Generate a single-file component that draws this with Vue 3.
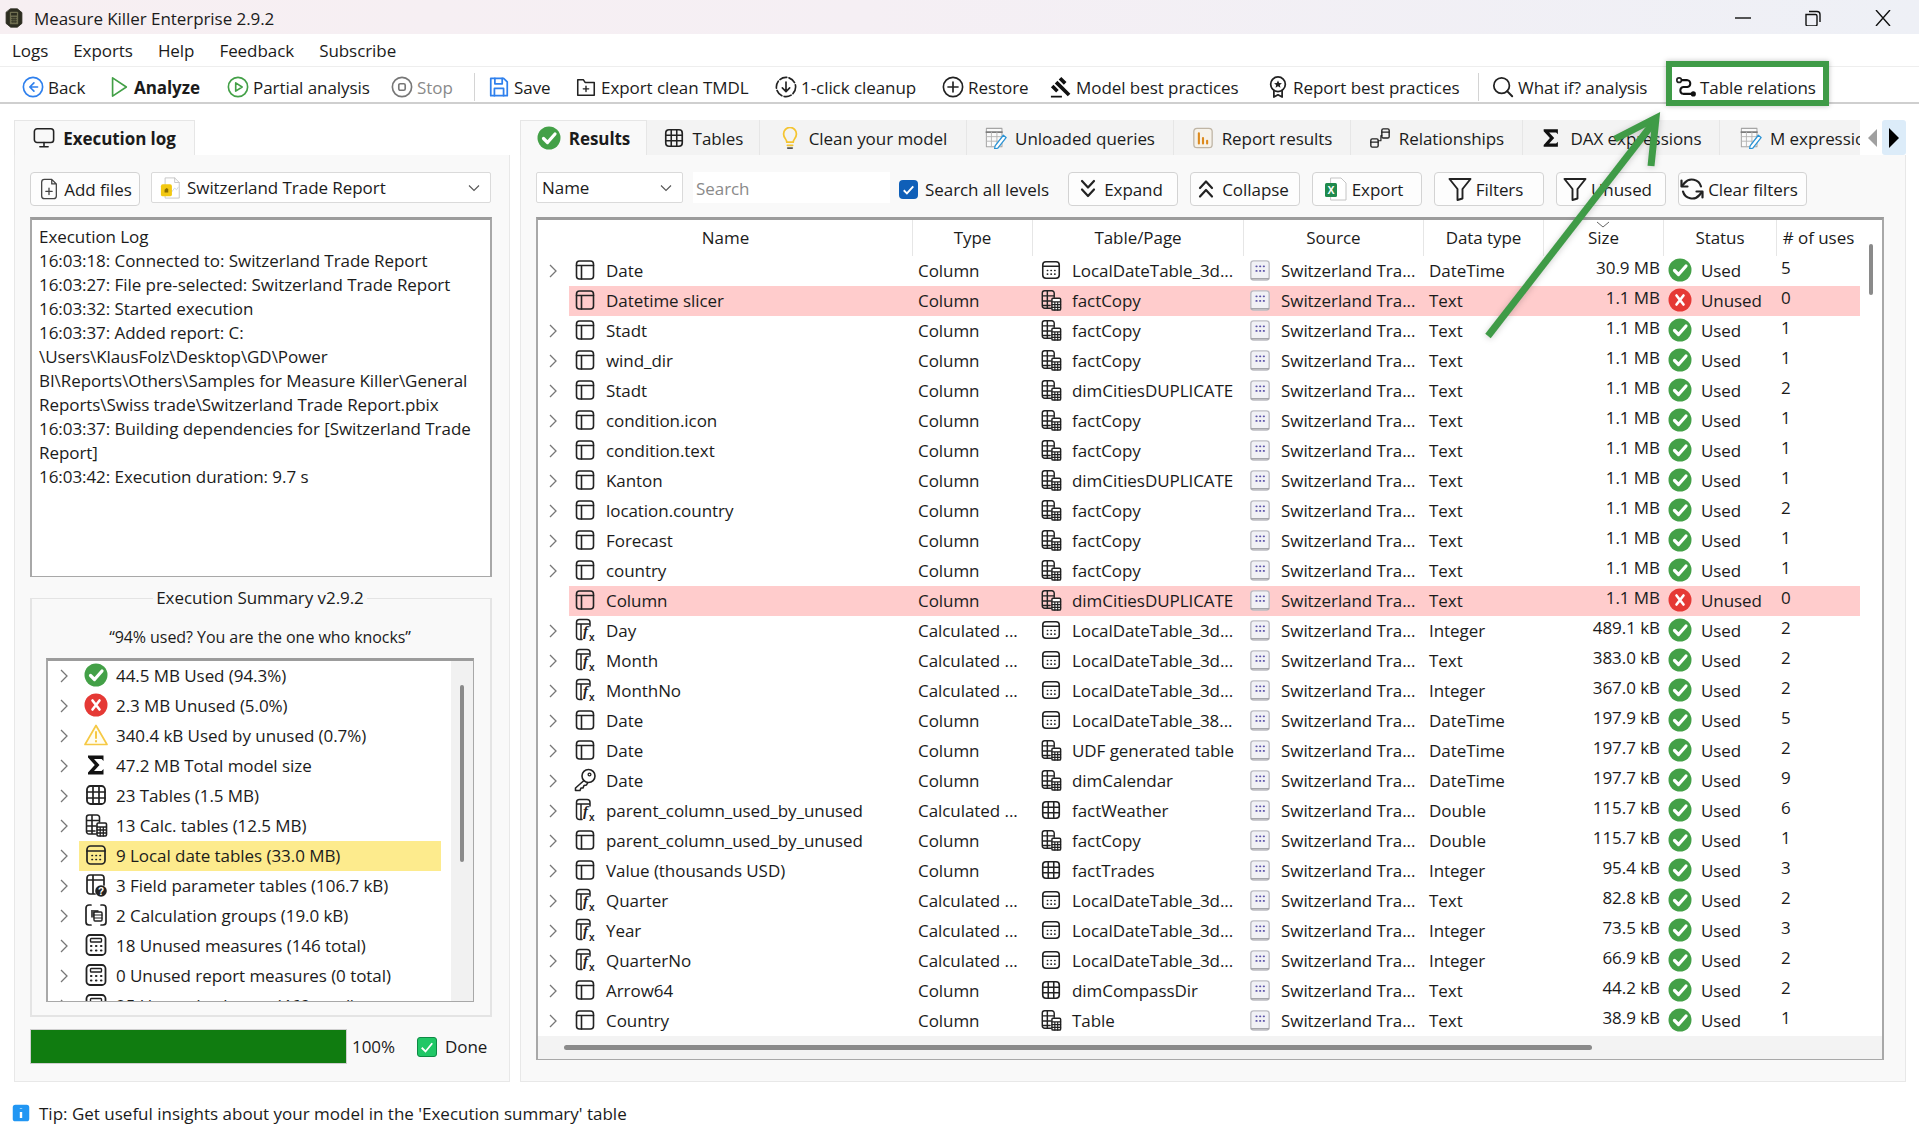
<script setup>
const icons = {
  logo: '<path d="M8 1h8l5.500 4.500v13L16 23H8l-5.500-4.500v-13z" fill="#2d2d20" stroke="#2d2d20" stroke-width="1"/><rect x="7" y="4.500" width="10" height="15" rx="1" fill="#6f6e50" stroke="none"/><rect x="8.500" y="6" width="7" height="3" fill="#2d2d20" stroke="none"/><path d="M8.500 11.500h7M8.500 14h7M8.500 16.500h7M10.700 10.500v7.500M13.300 10.500v7.500" stroke="#2d2d20" stroke-width=".9" stroke-linecap="butt"/>',
  back: '<circle cx="12" cy="12" r="10.5" stroke="#2f80ed" stroke-width="1.8"/><path d="M13 7.5 8.500 12l4.500 4.500M8.500 12H17" stroke="#2f80ed" stroke-width="1.8"/>',
  analyze: '<path d="M5 2 20 12 5 22z" stroke="#43a047" stroke-width="1.8"/>',
  partial: '<circle cx="12" cy="12" r="10.500" stroke="#43a047" stroke-width="1.800"/><path d="M9.500 7.500 16.500 12l-7 4.500z" stroke="#43a047" stroke-width="1.800"/>',
  stop: '<circle cx="12" cy="12" r="10.500" stroke="#777" stroke-width="1.800"/><rect x="8.500" y="8.500" width="7" height="7" rx="1.500" stroke="#777" stroke-width="1.800"/>',
  save: '<path d="M3 2.500h14l4 4v15H3z" stroke="#2f80ed" stroke-width="1.900"/><path d="M7.500 2.500v6h8v-6M7 21.500v-8h10v8" stroke="#2f80ed" stroke-width="1.900"/>',
  folder: '<path d="M3 4h6l2 3h10v14H3z"/><path d="M12 11v6M9 14h6" stroke-width="1.500"/>',
  cleanup: '<circle cx="12" cy="12" r="10.500" stroke-dasharray="8 2.500" stroke-width="1.800"/><path d="M12 6.500v10M8 13l4 4 4-4" stroke-width="1.800"/>',
  restore: '<circle cx="12" cy="12" r="10.500" stroke-width="1.800"/><path d="M12 6.500v11M6.500 12h11" stroke-width="1.800"/>',
  gavel: '<path d="M1 21.500h12v2H1zM5.245 8.070l2.830-2.827 14.140 14.142-2.828 2.828zM12.317 1l5.657 5.656-2.830 2.830-5.654-5.660zM3.825 9.485l5.657 5.657-2.828 2.828-5.657-5.657z" fill="#111" stroke="none"/>',
  ribbon: '<circle cx="12" cy="9" r="8" stroke-width="1.900"/><path d="m12 4.800 1.300 2.800 3 .3-2.300 2 .7 3-2.700-1.600-2.700 1.600.7-3-2.300-2 3-.3z" fill="#222" stroke="none"/><path d="M7.500 16v7l4.500-2.500 4.500 2.500v-7" stroke-width="1.900"/>',
  search: '<circle cx="10.500" cy="10.500" r="8.500" stroke-width="1.900"/><path d="m16.500 16.500 5.500 5.500" stroke-width="2.200"/>',
  relations: '<circle cx="4.500" cy="4.500" r="2.500" stroke-width="1.800"/><circle cx="20" cy="19.500" r="2.800" fill="#111" stroke="none"/><path d="M7.500 4.500h6a3.800 3.800 0 0 1 0 7.500H9a3.800 3.800 0 0 0 0 7.500h8.500" stroke-width="2.200" stroke="#111"/>',
  monitor: '<rect x="1.500" y="2" width="21" height="15" rx="3"/><path d="M12 17v4M7.500 21.500h9"/>',
  ok: '<circle cx="12" cy="12" r="11.500" fill="#43a047" stroke="none"/><path d="m6.500 12.500 4 4 7.500-8.500" stroke="#fff" stroke-width="3.200"/>',
  bad: '<circle cx="12" cy="12" r="11.500" fill="#e53935" stroke="none"/><path d="m8.500 7.500 7 9M15.500 7.500l-7 9" stroke="#fff" stroke-width="2.600"/>',
  warn: '<path d="M12 2.500 23 21.500H1z" stroke="#f6c945" fill="#fffdf0" stroke-width="1.700"/><path d="M12 9v6M12 18v.4" stroke="#f6c945" stroke-width="2"/>',
  sigma: '<path d="M4 2.500h15.500V8L17.600 6H10l5.500 6L10 18h7.600l1.900-2v5.500H4v-2l6.800-7.500L4 4.500z" fill="#111" stroke="none"/>',
  grid: '<rect x="3" y="3" width="18" height="18" rx="3.500" stroke-width="1.800"/><path d="M3 9h18M3 15h18M9 3v18M15 3v18" stroke-width="1.700"/>',
  calc: '<path d="M12 21H5a2.500 2.500 0 0 1-2.500-2.500v-14A2.500 2.500 0 0 1 5 2h8a2.500 2.500 0 0 1 2.500 2.500V9M2.500 7.500h13M2.500 13H12M2.500 18H11M8 2v19" stroke-width="1.600"/><rect x="13" y="10" width="9.500" height="13" rx="1.200" fill="#fff" stroke-width="1.600"/><path d="M13 14h9.500M13 17h9.500M13 20h9.500M16.200 14v9M19.300 14v9" stroke-width="1.300"/>',
  local: '<rect x="3" y="3" width="18" height="18" rx="3.500" stroke-width="1.700"/><path d="M3 8h18" stroke-width="1.700"/><path d="M8 12.500h.4M12 12.500h.4M16 12.500h.4M8 16.500h.4M12 16.500h.4M16 16.500h.4" stroke-width="1.700"/>',
  field: '<path d="M11 21H6a3 3 0 0 1-3-3V5a3 3 0 0 1 3-3h11a3 3 0 0 1 3 3v7M3 7h17M9 2v19" stroke-width="1.700"/><circle cx="17" cy="18" r="5.800" fill="#222" stroke="none"/><text x="17" y="21.500" font-family="Liberation Sans, sans-serif" font-size="10" font-weight="700" fill="#fff" stroke="none" text-anchor="middle">?</text>',
  group: '<path d="M7 2H5a3 3 0 0 0-3 3v14a3 3 0 0 0 3 3h2M17 2h2a3 3 0 0 1 3 3v14a3 3 0 0 1-3 3h-2" stroke-width="1.700"/><rect x="7" y="7" width="7.500" height="7.500" fill="#222" stroke="none" opacity=".8"/><rect x="10" y="9" width="8" height="9" rx="1" fill="#fff" stroke-width="1.400"/><path d="M10 12h8M10 15h8" stroke-width="1.200"/>',
  measure: '<rect x="2.500" y="2" width="19" height="20" rx="3.500" stroke-width="1.800"/><rect x="6.500" y="5.500" width="11" height="3.500" rx=".8" stroke-width="1.400"/><path d="M7 13h.4M12 13h.4M17 13h.4M7 17.500h.4M12 17.500h.4M17 17.500h.4" stroke-width="2.200"/>',
  column: '<rect x="3.500" y="3" width="17" height="18" rx="3" stroke-width="1.600"/><path d="M3.500 7.500h17M8.500 7.500V21" stroke-width="1.600"/>',
  calccol: '<path d="M9 21.500H6.500a3 3 0 0 1-3-3v-14a3 3 0 0 1 3-3H14a3 3 0 0 1 3 3V8M3.500 6h13.500M8 6v15" stroke-width="1.500"/><text x="10" y="18" font-family="Liberation Serif, serif" font-style="italic" font-size="15" font-weight="700" fill="#222" stroke="none">f</text><text x="16" y="22.500" font-family="Liberation Sans, sans-serif" font-size="10" font-weight="700" fill="#222" stroke="none">x</text>',
  key: '<circle cx="15.500" cy="8" r="6.500" stroke-width="1.600"/><circle cx="16.500" cy="6.500" r="1.400" stroke-width="1.300"/><path d="M11 12.500 2.500 20v2.500H7l1-2.500h2l1-2.500 2.500-.5 1-2" stroke-width="1.600"/>',
  source: '<rect x="2" y="2" width="20" height="21" rx="3" fill="#f1f1f5" stroke="#bcbcc2" stroke-width="1.500"/><path d="M2.500 21.500h19" stroke="#a5a5aa" stroke-width="1.500"/><path d="M8 8h.4M12 8h.4M16 8h.4M8 13h.4M12 13h.4M16 13h.4" stroke="#5b52a8" stroke-width="2"/>',
  pbix: '<path d="M6 1h10l5 5v17H6z" fill="#fff" stroke="#c4c4c4" stroke-width="1"/><path d="M16 1v5h5" stroke="#c4c4c4" stroke-width="1"/><path d="m13 16 3-4 2 2 2-3" stroke="#c9d4e4" stroke-width="1"/><rect x="1" y="8" width="12" height="13" rx="2" fill="#f2c811" stroke="none"/><path d="M5 17v-3l2-2 2 1v4z" fill="#8a6d00" stroke="none"/>',
  excel: '<path d="M7 1h10l5 5v17H7z" fill="#fff" stroke="#c4c4c4" stroke-width="1"/><rect x="1" y="6" width="12" height="14" rx="1.500" fill="#1f8a4c" stroke="none"/><text x="7" y="17" font-family="Liberation Sans, sans-serif" font-size="10.500" font-weight="700" fill="#fff" stroke="none" text-anchor="middle">X</text>',
  funnel: '<path d="M1.500 2h21l-8 10v9.500l-5 1.500V12z" stroke-width="1.900"/>',
  refresh: '<path d="M21 9.500A9.500 9.500 0 0 0 4.500 6L2 9M3 14.500A9.500 9.500 0 0 0 19.500 18L22 15" stroke-width="2.200"/><path d="M1.500 3.500V9.500h6M22.500 20.500v-6h-6" stroke-width="2.200"/>',
  expand: '<path d="m6 4 6 6.500L18 4M6 12.500 12 19l6-6.500" stroke-width="2.200"/>',
  collapse: '<path d="m6 11 6-6.500L18 11M6 19.500 12 13l6 6.500" stroke-width="2.200"/>',
  addfile: '<path d="M15 1.500H7A3 3 0 0 0 4 4.500v15a3 3 0 0 0 3 3h10a3 3 0 0 0 3-3V6.500zM15 1.500v5h5" stroke="#444" stroke-width="1.400"/><path d="M12 11v7M8.500 14.500h7" stroke="#444" stroke-width="1.400"/>',
  bulb: '<path d="M8.500 16.500c0-3-3.500-4.500-3.500-9a7 7 0 0 1 14 0c0 4.500-3.500 6-3.500 9z" stroke="#f4c430" stroke-width="1.900"/><path d="M9 20h6" stroke="#f4c430" stroke-width="1.800"/><path d="M9.500 23h5" stroke="#555" stroke-width="1.800"/>',
  tableedit: '<rect x="1.500" y="1.500" width="17" height="20" fill="#fafafa" stroke="#a5a5a5" stroke-width="1.100"/><path d="M1.500 5.500h17" stroke="#7c7c7c" stroke-width="2"/><path d="M1.500 10.500h17M1.500 15.500h17M7 5.500v16M13 5.500v16" stroke="#b5b5b5" stroke-width="1"/><path d="m20 9 3 2.500L14 23l-3.500 1 .5-3.500z" fill="#fff" stroke="#2a93d5" stroke-width="1.400"/>',
  report: '<rect x="2" y="1.500" width="20" height="21" rx="3.500" fill="#f6f2ea" stroke="#bfb5a5" stroke-width="1.400"/><path d="M7.500 7v11" stroke="#dc8a1e" stroke-width="2.300"/><path d="M12 12v6" stroke="#dc8a1e" stroke-width="2.300"/><path d="M16.500 15v3" stroke="#dc8a1e" stroke-width="2.300"/>',
  rels: '<rect x="2" y="13" width="8" height="9" rx="1.500" stroke-width="1.500"/><path d="M2 16.500h8" stroke-width="1.400"/><rect x="14" y="2" width="8" height="10" rx="1.500" stroke-width="1.500"/><path d="M14 5.500h8" stroke-width="1.400"/><path d="M10 15h3V9.500h1" stroke-width="1.300"/>',
  tip: '<rect x="1" y="1" width="22" height="22" rx="3.500" fill="#2196f3" stroke="none"/><path d="M12 10.500v8M12 6v.8" stroke="#fff" stroke-width="3.200" stroke-linecap="butt"/>'
}

const menus = ['Logs', 'Exports', 'Help', 'Feedback', 'Subscribe']

const tools = [
  { icon: 'back', label: 'Back' },
  { icon: 'analyze', label: 'Analyze', bold: true },
  { icon: 'partial', label: 'Partial analysis' },
  { icon: 'stop', label: 'Stop', off: true },
  { sep: true },
  { icon: 'save', label: 'Save' },
  { icon: 'folder', label: 'Export clean TMDL' },
  { icon: 'cleanup', label: '1-click cleanup' },
  { icon: 'restore', label: 'Restore' },
  { icon: 'gavel', label: 'Model best practices' },
  { icon: 'ribbon', label: 'Report best practices' },
  { sep: true },
  { icon: 'search', label: 'What if? analysis' },
  { icon: 'relations', label: 'Table relations', boxed: true }
]

const tabs = [
  { icon: 'ok', label: 'Results', active: true },
  { icon: 'grid', label: 'Tables' },
  { icon: 'bulb', label: 'Clean your model' },
  { icon: 'tableedit', label: 'Unloaded queries' },
  { icon: 'report', label: 'Report results' },
  { icon: 'rels', label: 'Relationships' },
  { icon: 'sigma', label: 'DAX expressions' },
  { icon: 'tableedit', label: 'M expressions', cut: true }
]

const logLines = [
  'Execution Log',
  '16:03:18: Connected to: Switzerland Trade Report',
  '16:03:27: File pre-selected: Switzerland Trade Report',
  '16:03:32: Started execution',
  '16:03:37: Added report: C:',
  '\\Users\\KlausFolz\\Desktop\\GD\\Power',
  'BI\\Reports\\Others\\Samples for Measure Killer\\General',
  'Reports\\Swiss trade\\Switzerland Trade Report.pbix',
  '16:03:37: Building dependencies for [Switzerland Trade',
  'Report]',
  '16:03:42: Execution duration: 9.7 s'
]

const summary = [
  { icon: 'ok', text: '44.5 MB Used (94.3%)' },
  { icon: 'bad', text: '2.3 MB Unused (5.0%)' },
  { icon: 'warn', text: '340.4 kB Used by unused (0.7%)' },
  { icon: 'sigma', text: '47.2 MB Total model size' },
  { icon: 'grid', text: '23 Tables (1.5 MB)' },
  { icon: 'calc', text: '13 Calc. tables (12.5 MB)' },
  { icon: 'local', text: '9 Local date tables (33.0 MB)', hl: true },
  { icon: 'field', text: '3 Field parameter tables (106.7 kB)' },
  { icon: 'group', text: '2 Calculation groups (19.0 kB)' },
  { icon: 'measure', text: '18 Unused measures (146 total)' },
  { icon: 'measure', text: '0 Unused report measures (0 total)' },
  { icon: 'measure', text: '25 Unused columns (469 total)' }
]

const columns = ['Name', 'Type', 'Table/Page', 'Source', 'Data type', 'Size', 'Status', '# of uses']

const L3 = 'LocalDateTable_3d...'
const D = 'dimCitiesDUPLICATE'
// name, icon, table icon, table, data type, size, uses
const raw = [
  ['Date', 'column', 'local', L3, 'DateTime', '30.9 MB', 5],
  ['Datetime slicer', 'column', 'calc', 'factCopy', 'Text', '1.1 MB', 0],
  ['Stadt', 'column', 'calc', 'factCopy', 'Text', '1.1 MB', 1],
  ['wind_dir', 'column', 'calc', 'factCopy', 'Text', '1.1 MB', 1],
  ['Stadt', 'column', 'calc', D, 'Text', '1.1 MB', 2],
  ['condition.icon', 'column', 'calc', 'factCopy', 'Text', '1.1 MB', 1],
  ['condition.text', 'column', 'calc', 'factCopy', 'Text', '1.1 MB', 1],
  ['Kanton', 'column', 'calc', D, 'Text', '1.1 MB', 1],
  ['location.country', 'column', 'calc', 'factCopy', 'Text', '1.1 MB', 2],
  ['Forecast', 'column', 'calc', 'factCopy', 'Text', '1.1 MB', 1],
  ['country', 'column', 'calc', 'factCopy', 'Text', '1.1 MB', 1],
  ['Column', 'column', 'calc', D, 'Text', '1.1 MB', 0],
  ['Day', 'calccol', 'local', L3, 'Integer', '489.1 kB', 2],
  ['Month', 'calccol', 'local', L3, 'Text', '383.0 kB', 2],
  ['MonthNo', 'calccol', 'local', L3, 'Integer', '367.0 kB', 2],
  ['Date', 'column', 'local', 'LocalDateTable_38...', 'DateTime', '197.9 kB', 5],
  ['Date', 'column', 'calc', 'UDF generated table', 'DateTime', '197.7 kB', 2],
  ['Date', 'key', 'calc', 'dimCalendar', 'DateTime', '197.7 kB', 9],
  ['parent_column_used_by_unused', 'calccol', 'grid', 'factWeather', 'Double', '115.7 kB', 6],
  ['parent_column_used_by_unused', 'column', 'calc', 'factCopy', 'Double', '115.7 kB', 1],
  ['Value (thousands USD)', 'column', 'grid', 'factTrades', 'Integer', '95.4 kB', 3],
  ['Quarter', 'calccol', 'local', L3, 'Text', '82.8 kB', 2],
  ['Year', 'calccol', 'local', L3, 'Integer', '73.5 kB', 3],
  ['QuarterNo', 'calccol', 'local', L3, 'Integer', '66.9 kB', 2],
  ['Arrow64', 'column', 'grid', 'dimCompassDir', 'Text', '44.2 kB', 2],
  ['Country', 'column', 'calc', 'Table', 'Text', '38.9 kB', 1]
]

const rows = raw.map((r) => ({
  name: r[0],
  icon: r[1],
  type: r[1] === 'calccol' ? 'Calculated ...' : 'Column',
  tableIcon: r[2],
  table: r[3],
  dataType: r[4],
  size: r[5],
  uses: r[6],
  unused: r[6] === 0
}))
</script>

<template>
  <div class="app">
    <div class="titlebar">
      <svg class="ic logo" viewBox="0 0 24 24" v-html="icons.logo"></svg>
      <span class="title">Measure Killer Enterprise 2.9.2</span>
      <div class="winctl">
        <svg class="wbtn" viewBox="0 0 16 16"><path d="M0 8h16" /></svg>
        <svg class="wbtn" viewBox="0 0 16 16"><path d="M1 4.500h9.500a1.500 1.500 0 0 1 1.500 1.500v8.500a1.500 1.500 0 0 1-1.500 1.500H2.500A1.500 1.500 0 0 1 1 14.500zM4 1.500h8a3 3 0 0 1 3 3V12" /></svg>
        <svg class="wbtn" viewBox="0 0 16 16"><path d="M1 0l14 16M15 0 1 16" /></svg>
      </div>
    </div>

    <div class="menubar">
      <span v-for="m in menus" :key="m">{{ m }}</span>
    </div>

    <div class="toolbar">
      <template v-for="(t, i) in tools" :key="i">
        <span v-if="t.sep" class="tool-sep"></span>
        <div v-else class="tool" :class="{ off: t.off, bold: t.bold, boxed: t.boxed }">
          <svg class="ic" viewBox="0 0 24 24" v-html="icons[t.icon]"></svg>
          <span>{{ t.label }}</span>
        </div>
      </template>
    </div>

    <div class="main">
      <section class="left">
        <div class="tabstrip left-strip">
          <div class="tab active exec-tab">
            <svg class="ic" viewBox="0 0 24 24" v-html="icons.monitor"></svg>
            <span>Execution log</span>
          </div>
        </div>
        <div class="panel left-panel">
          <div class="file-row">
            <div class="btn add-btn">
              <svg class="ic" viewBox="0 0 24 24" v-html="icons.addfile"></svg>
              <span>Add files</span>
            </div>
            <div class="combo file-combo">
              <svg class="ic" viewBox="0 0 24 24" v-html="icons.pbix"></svg>
              <span>Switzerland Trade Report</span>
              <svg class="caret" viewBox="0 0 12 8"><path d="M1 1.500 6 6.500l5-5" /></svg>
            </div>
          </div>

          <div class="logbox">
            <div v-for="(l, i) in logLines" :key="i">{{ l }}</div>
          </div>

          <fieldset class="summary">
            <legend>Execution Summary v2.9.2</legend>
            <div class="quote">“94% used? You are the one who knocks”</div>
            <div class="tree">
              <div class="tree-list">
                <div v-for="s in summary" :key="s.text" class="tree-row">
                  <svg class="chev" viewBox="0 0 8 14"><path d="M1 1l6 6-6 6" /></svg>
                  <div class="tree-item" :class="{ hl: s.hl }">
                    <svg class="ic" viewBox="0 0 24 24" v-html="icons[s.icon]"></svg>
                    <span>{{ s.text }}</span>
                  </div>
                </div>
              </div>
              <div class="tree-scroll"><div class="tree-thumb"></div></div>
            </div>
          </fieldset>

          <div class="progress-row">
            <div class="progress"></div>
            <span class="pct">100%</span>
            <span class="done-box">
              <svg viewBox="0 0 12 12"><path d="m2.500 6.500 2.500 2.500 4.500-5.500" /></svg>
            </span>
            <span>Done</span>
          </div>
        </div>
      </section>

      <section class="right">
        <div class="tabstrip right-strip">
          <div
            v-for="t in tabs"
            :key="t.label"
            class="tab"
            :class="{ active: t.active, cut: t.cut }"
          >
            <svg class="ic" viewBox="0 0 24 24" v-html="icons[t.icon]"></svg>
            <span>{{ t.label }}</span>
          </div>
          <div class="tab-nav">
            <span class="arrow-l"></span>
            <span class="arrow-r"><i></i></span>
          </div>
        </div>

        <div class="panel right-panel">
          <div class="filter-row">
            <div class="combo name-combo">
              <span>Name</span>
              <svg class="caret" viewBox="0 0 12 8"><path d="M1 1.500 6 6.500l5-5" /></svg>
            </div>
            <div class="search-box">Search</div>
            <div class="level-check">
              <span class="check-blue">
                <svg viewBox="0 0 12 12"><path d="m3 6.500 2 2 4-4.500" /></svg>
              </span>
              <span>Search all levels</span>
            </div>
            <div class="btn w110"><svg class="ic" viewBox="0 0 24 24" v-html="icons.expand"></svg><span>Expand</span></div>
            <div class="btn w110"><svg class="ic" viewBox="0 0 24 24" v-html="icons.collapse"></svg><span>Collapse</span></div>
            <div class="btn w110"><svg class="ic" viewBox="0 0 24 24" v-html="icons.excel"></svg><span>Export</span></div>
            <div class="btn w110"><svg class="ic" viewBox="0 0 24 24" v-html="icons.funnel"></svg><span>Filters</span></div>
            <div class="btn w110"><svg class="ic" viewBox="0 0 24 24" v-html="icons.funnel"></svg><span>Unused</span></div>
            <div class="btn w129"><svg class="ic" viewBox="0 0 24 24" v-html="icons.refresh"></svg><span>Clear filters</span></div>
          </div>

          <div class="result-box">
            <div class="result-top">
              <div class="result-table">
                <div class="head-row">
                  <div v-for="c in columns" :key="c" class="head-cell">
                    <svg v-if="c === 'Size'" class="sort" viewBox="0 0 14 7"><path d="M1 1l6 5 6-5" /></svg>
                    {{ c }}
                  </div>
                </div>
                <div v-for="(r, i) in rows" :key="i" class="row" :class="{ hl: r.unused }">
                  <div class="twist">
                    <svg v-if="!r.unused" class="chev" viewBox="0 0 8 14"><path d="M1 1l6 6-6 6" /></svg>
                  </div>
                  <div class="cell c-name">
                    <svg class="ic" viewBox="0 0 24 24" v-html="icons[r.icon]"></svg>
                    <span>{{ r.name }}</span>
                  </div>
                  <div class="cell c-type">{{ r.type }}</div>
                  <div class="cell c-table">
                    <svg class="ic" viewBox="0 0 24 24" v-html="icons[r.tableIcon]"></svg>
                    <span>{{ r.table }}</span>
                  </div>
                  <div class="cell c-source">
                    <svg class="ic" viewBox="0 0 24 24" v-html="icons.source"></svg>
                    <span>Switzerland Tra...</span>
                  </div>
                  <div class="cell c-dtype">{{ r.dataType }}</div>
                  <div class="cell c-size"><span>{{ r.size }}</span></div>
                  <div class="cell c-status">
                    <svg class="ic" viewBox="0 0 24 24" v-html="r.unused ? icons.bad : icons.ok"></svg>
                    <span>{{ r.unused ? 'Unused' : 'Used' }}</span>
                  </div>
                  <div class="cell c-uses"><span>{{ r.uses }}</span></div>
                </div>
              </div>
              <div class="v-scroll"><div class="v-thumb"></div></div>
            </div>
            <div class="h-scroll"><div class="h-thumb"></div></div>
          </div>
        </div>
      </section>
    </div>

    <div class="tipbar">
      <svg class="ic" viewBox="0 0 24 24" v-html="icons.tip"></svg>
      <span>Tip: Get useful insights about your model in the 'Execution summary' table</span>
    </div>

    <!-- annotation drawn over the screenshot -->
    <svg class="annot" viewBox="0 0 1919 1124">
      <path d="M1488 336 1654 122" />
      <path d="M1615 139 1656 118 1651 166" />
    </svg>
  </div>
</template>

<style>
html, body {
  margin: 0;
  background: #fff;
}
</style>

<style scoped>
.app {
  position: relative;
  width: 1919px;
  height: 1124px;
  overflow: hidden;
  display: flex;
  flex-direction: column;
  background: #fff;
  color: #1b1b1b;
  font-family: "Open Sans", "Noto Sans", sans-serif;
  font-size: 17px;
  letter-spacing: -0.06px;
}

.ic {
  width: 22px;
  height: 22px;
  flex: none;
  fill: none;
  stroke: #222;
  stroke-width: 1.7;
  stroke-linecap: round;
  stroke-linejoin: round;
}

.titlebar {
  height: 34px;
  box-sizing: border-box;
  padding: 2px 0 0 4px;
  display: flex;
  align-items: center;
  background: linear-gradient(90deg, #f7eff2, #f5eff4 45%, #eef0f6);
}

.logo {
  width: 20px;
  height: 24px;
}

.title {
  margin-left: 10px;
}

.winctl {
  margin-left: auto;
  display: flex;
  gap: 54px;
  padding-right: 28px;
}

.wbtn {
  width: 16px;
  height: 16px;
  fill: none;
  stroke: #111;
  stroke-width: 1.4;
}

.menubar {
  height: 32px;
  display: flex;
  align-items: center;
  gap: 25px;
  padding-left: 12px;
}

.toolbar {
  height: 38px;
  box-sizing: border-box;
  padding: 5px 0 0 22px;
  display: grid;
  grid-template-columns: 86px 119px 164px 83px 14px 87px 200px 167px 108px 217px 211px 14px 183px auto;
  align-items: center;
  border-top: 1px solid #eeeeee;
  border-bottom: 2px solid #cfcfcf;
}

.tool {
  display: flex;
  align-items: center;
  gap: 4px;
  white-space: nowrap;
}

.tool.bold {
  font-weight: 700;
}

.tool.off {
  color: #8a8a8a;
}

.tool-sep {
  width: 1px;
  height: 28px;
  background: #d4d4d4;
}

.tool.boxed {
  position: relative;
  width: 141px;
  gap: 3px;
}

.tool.boxed::after {
  content: "";
  position: absolute;
  left: -9px;
  right: -13px;
  top: -15px;
  bottom: -7px;
  border: 6px solid #3f9b47;
  box-shadow: 0 0 5px rgba(0, 0, 0, 0.25);
}

.main {
  display: flex;
  gap: 10px;
  padding: 16px 13px 0 14px;
}

.left {
  width: 496px;
}

.right {
  width: 1386px;
}

.tabstrip {
  height: 35px;
  display: flex;
}

.right-strip {
  background: #f3f3f3;
}

.tab {
  height: 35px;
  display: flex;
  align-items: center;
  justify-content: center;
  gap: 8px;
  padding-top: 1px;
  border-right: 1px solid #e6e6e6;
  box-sizing: border-box;
  white-space: nowrap;
  overflow: hidden;
}

.tab.active {
  background: #f9f9f9;
  font-weight: 700;
  padding-top: 0;
  border-top: 1px solid #e6e6e6;
  border-left: 1px solid #e6e6e6;
}

.right-strip .tab.active .ic {
  width: 24px;
  height: 24px;
}

.exec-tab {
  width: 181px;
}

.right-strip .tab:nth-child(1) { width: 127px; }
.right-strip .tab:nth-child(2) { width: 113px; }
.right-strip .tab:nth-child(3) { width: 207px; }
.right-strip .tab:nth-child(4) { width: 207px; }
.right-strip .tab:nth-child(5) { width: 177px; }
.right-strip .tab:nth-child(6) { width: 172px; }
.right-strip .tab:nth-child(7) { width: 197px; }
.right-strip .tab:nth-child(8) { width: 140px; }

.tab.cut {
  justify-content: flex-start;
  padding-left: 20px;
  border-right: none;
}

.tab-nav {
  flex: 1;
  display: flex;
  align-items: center;
  justify-content: space-between;
  background: #fff;
  padding-left: 8px;
}

.arrow-l {
  width: 0;
  height: 0;
  border-top: 9px solid transparent;
  border-bottom: 9px solid transparent;
  border-right: 9px solid #a0a0a0;
}

.arrow-r {
  width: 24px;
  height: 35px;
  background: #dcecf9;
  display: flex;
  align-items: center;
  justify-content: center;
  border-radius: 3px;
}

.arrow-r i {
  width: 0;
  height: 0;
  border-top: 10px solid transparent;
  border-bottom: 10px solid transparent;
  border-left: 10px solid #000;
}

.panel {
  height: 927px;
  box-sizing: border-box;
  background: #f9f9f9;
  border: 1px solid #e8e8e8;
  border-top: none;
}

.left-panel {
  padding: 17px 17px 0 15px;
}

.file-row {
  display: flex;
  gap: 11px;
  align-items: flex-start;
}

.btn {
  height: 34px;
  box-sizing: border-box;
  display: flex;
  align-items: center;
  justify-content: center;
  gap: 4px;
  background: #fdfdfd;
  border: 1px solid #d3d3d3;
  border-radius: 4px;
  white-space: nowrap;
}

.add-btn {
  width: 110px;
}

.combo {
  height: 31px;
  box-sizing: border-box;
  display: flex;
  align-items: center;
  gap: 5px;
  background: #fff;
  border: 1px solid #dadada;
  border-radius: 2px;
  padding: 0 5px;
}

.file-combo {
  width: 340px;
  padding-left: 8px;
}

.name-combo {
  width: 147px;
}

.caret {
  width: 12px;
  height: 8px;
  margin-left: auto;
  margin-right: 5px;
  fill: none;
  stroke: #555;
  stroke-width: 1.1;
}

.logbox {
  margin-top: 11px;
  width: 462px;
  height: 360px;
  box-sizing: border-box;
  background: #fff;
  border-top: 3px solid #9c9c9c;
  border-left: 2px solid #a8a8a8;
  border-right: 2px solid #a8a8a8;
  border-bottom: 1px solid #a8a8a8;
  padding: 5px 7px;
  line-height: 24px;
  white-space: nowrap;
  overflow: hidden;
}

.summary {
  margin: 9px 0 0;
  padding: 15px 16px 0 14px;
  width: 462px;
  height: 431px;
  box-sizing: border-box;
  border: 2px solid #e4e4e4;
  border-top-width: 1px;
  min-width: 0;
}

.summary legend {
  margin: 0 auto;
  padding: 0 3px;
  line-height: 24px;
}

.quote {
  text-align: center;
  line-height: 24px;
  font-size: 16px;
}

.tree {
  margin-top: 9px;
  height: 344px;
  box-sizing: border-box;
  display: flex;
  background: #fff;
  border-top: 3px solid #9c9c9c;
  border-left: 2px solid #a8a8a8;
  border-right: 1px solid #a8a8a8;
  border-bottom: 1px solid #a8a8a8;
  overflow: hidden;
}

.tree-list {
  width: 403px;
  flex: none;
}

.tree-row {
  height: 30px;
  display: flex;
  align-items: center;
}

.tree-row .chev {
  margin-left: 12px;
  margin-right: 11px;
}

.chev {
  width: 8px;
  height: 14px;
  flex: none;
  fill: none;
  stroke: #777;
  stroke-width: 1.3;
}

.tree-item {
  width: 362px;
  height: 30px;
  display: flex;
  align-items: center;
  gap: 8px;
  padding: 0 0 2px 5px;
  box-sizing: border-box;
}

.tree-item .ic {
  width: 24px;
  height: 24px;
}

.tree-item.hl {
  background: #fdeb8d;
}

.tree-scroll {
  flex: 1;
  background: #f1f1f1;
  display: flex;
  justify-content: center;
}

.tree-thumb {
  width: 4px;
  height: 177px;
  margin-top: 24px;
  background: #8a8a8a;
  border-radius: 2px;
}

.progress-row {
  display: flex;
  align-items: center;
  margin-top: 12px;
  height: 35px;
}

.progress {
  width: 317px;
  height: 35px;
  box-sizing: border-box;
  background: #107c10;
  border: 1px solid #cfcfcf;
}

.pct {
  margin-left: 5px;
  margin-right: 22px;
}

.done-box {
  width: 20px;
  height: 20px;
  box-sizing: border-box;
  margin-right: 8px;
  border: 1.5px solid #0e8a45;
  border-radius: 3px;
  background: #20c766;
}

.done-box svg,
.check-blue svg {
  display: block;
  fill: none;
  stroke: #fff;
  stroke-width: 1.2;
}

.right-panel {
  padding: 17px 20px 0 15px;
}

.filter-row {
  display: flex;
  align-items: flex-start;
  gap: 12px;
}

.filter-row .btn .ic {
  width: 24px;
  height: 24px;
}

.filter-row .btn span {
  margin-right: 7px;
}

.search-box {
  width: 197px;
  height: 31px;
  line-height: 33px;
  margin-left: -2px;
  padding-left: 3px;
  box-sizing: border-box;
  background: #fff;
  color: #8a8a8a;
}

.level-check {
  display: flex;
  align-items: center;
  gap: 7px;
  height: 34px;
  width: 151px;
  margin-left: -3px;
  margin-right: 6px;
  white-space: nowrap;
}

.check-blue {
  width: 19px;
  height: 19px;
  flex: none;
  border-radius: 4px;
  background: #0f5fb8;
}

.w110 { width: 110px; }
.w129 { width: 129px; }

.result-box {
  margin-top: 11px;
  width: 1348px;
  height: 843px;
  box-sizing: border-box;
  display: flex;
  flex-direction: column;
  background: #f3f3f3;
  border-top: 3px solid #9c9c9c;
  border-left: 2px solid #a8a8a8;
  border-right: 2px solid #a8a8a8;
  border-bottom: 1px solid #a8a8a8;
}

.result-top {
  display: flex;
  background: #fff;
}

.result-table {
  width: 1321px;
  flex: none;
  margin-left: 1px;
  background: #fff;
}

.head-row,
.row {
  display: grid;
  grid-template-columns: 30px 344px 120px 211px 180px 120px 120px 113px 83px;
}

.head-row {
  height: 36px;
  grid-template-columns: 374px 120px 211px 180px 120px 120px 113px 83px;
}

.head-cell {
  position: relative;
  display: flex;
  align-items: center;
  justify-content: center;
  padding-bottom: 2px;
  box-sizing: border-box;
  border-right: 1px solid #e6e6e6;
  white-space: nowrap;
}

.head-cell:last-child {
  border-right: none;
}

.sort {
  position: absolute;
  top: 1px;
  left: 52px;
  width: 14px;
  height: 7px;
  fill: none;
  stroke: #666;
  stroke-width: 1;
}

.row {
  height: 30px;
}

.twist {
  display: flex;
  align-items: center;
  padding-left: 10px;
}

.cell {
  display: flex;
  align-items: center;
  padding-bottom: 2px;
  box-sizing: border-box;
  white-space: nowrap;
  overflow: hidden;
}

.row.hl .cell {
  background: #ffcccc;
}

.c-name {
  padding-left: 4px;
  gap: 9px;
}

.c-name .ic {
  width: 24px;
  height: 24px;
}

.c-type {
  padding-left: 5px;
}

.c-table {
  padding-left: 7px;
  gap: 10px;
}

.c-source {
  padding-left: 5px;
  gap: 10px;
}

.c-dtype {
  padding-left: 5px;
}

.c-size {
  justify-content: flex-end;
  padding-right: 4px;
}

.c-size span,
.c-uses span {
  margin-top: -6px;
}

.c-status {
  padding-left: 4px;
  gap: 9px;
}

.c-status .ic {
  width: 24px;
  height: 24px;
}

.c-uses {
  padding-left: 4px;
}

.v-scroll {
  flex: 1;
  display: flex;
  justify-content: center;
  background: #fff;
}

.v-thumb {
  width: 4px;
  height: 51px;
  margin-top: 24px;
  background: #8a8a8a;
  border-radius: 2px;
}

.h-scroll {
  flex: 1;
  display: flex;
  align-items: center;
  padding-left: 26px;
}

.h-thumb {
  width: 1028px;
  height: 5px;
  background: #8a8a8a;
  border-radius: 3px;
}

.tipbar {
  display: flex;
  align-items: center;
  gap: 9px;
  padding: 21px 0 0 12px;
  height: 20px;
  letter-spacing: 0;
}

.tipbar .ic {
  width: 18px;
  height: 18px;
}

.annot {
  position: absolute;
  left: 0;
  top: 0;
  width: 1919px;
  height: 1124px;
  fill: none;
  stroke: #3f9b47;
  stroke-width: 7;
  filter: drop-shadow(0 1px 3px rgba(0, 0, 0, 0.2));
  pointer-events: none;
}
</style>
